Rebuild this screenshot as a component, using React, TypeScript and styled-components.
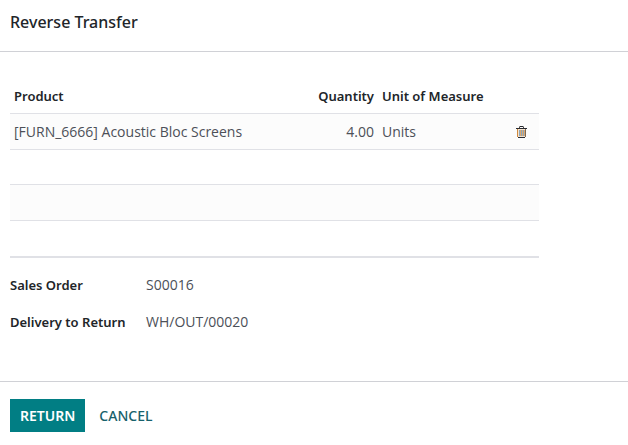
import React from "react";
import styled, { createGlobalStyle } from "styled-components";

const GlobalStyle = createGlobalStyle`
  *, *::before, *::after { box-sizing: border-box; }
  body {
    margin: 0;
    background: #fff;
    color: #4c5058;
    font-family: "Noto Sans", sans-serif;
    font-size: 14px;
    line-height: 20px;
  }
`;

const Dialog = styled.section`
  display: flex;
  flex-direction: column;
`;

const DialogHeader = styled.header`
  padding: 10px 10px 17px;
  border-bottom: 1px solid #d0d1d6;
`;

const Title = styled.h1`
  margin: 0;
  color: #212529;
  font-size: 16px;
  font-weight: 500;
  line-height: 24px;
`;

const DialogBody = styled.main`
  padding: 28px 89px 49px 10px;
`;

const LinesTable = styled.table`
  width: 100%;
  border-collapse: separate;
  border-spacing: 0;
  table-layout: fixed;
  border-bottom: 1px solid #e0e1e6;
`;

const Column = styled.col<{ $width?: number }>`
  width: ${({ $width }) => ($width ? `${$width}px` : "auto")};
`;

const HeadCell = styled.th<{ $align?: "right" }>`
  height: 34px;
  padding: 0 4px 2px;
  border-bottom: 1px solid #e0e1e6;
  color: #212529;
  font-size: 13px;
  font-weight: 600;
  text-align: ${({ $align }) => $align ?? "left"};
  white-space: nowrap;
`;

const Row = styled.tr<{ $compact?: boolean }>`
  height: ${({ $compact }) => ($compact ? 35 : 36)}px;
  &:nth-child(odd) { background: #fcfcfc; }
`;

const Cell = styled.td<{ $align?: "right" }>`
  padding: 0 4px;
  border-bottom: 1px solid #e0e1e6;
  font-family: "Open Sans", sans-serif;
  text-align: ${({ $align }) => $align ?? "left"};
  white-space: nowrap;
`;

const DeleteButton = styled.button`
  display: flex;
  padding: 0;
  border: 0;
  background: none;
  color: #212529;
  cursor: pointer;
`;

const Fields = styled.dl`
  display: grid;
  grid-template-columns: 136px 1fr;
  row-gap: 17px;
  margin: 17px 0 0;
`;

const FieldLabel = styled.dt`
  color: #212529;
  font-size: 13px;
  font-weight: 600;
`;

const FieldValue = styled.dd`
  margin: 0;
  font-family: "Open Sans", sans-serif;
`;

const DialogFooter = styled.footer`
  display: flex;
  gap: 4px;
  padding: 17px 10px 13px;
  border-top: 1px solid #d0d1d6;
`;

const Button = styled.button<{ $primary?: boolean }>`
  height: 33px;
  padding: 0 10px;
  border: 0;
  background: ${({ $primary }) => ($primary ? "#017e84" : "transparent")};
  color: ${({ $primary }) => ($primary ? "#fff" : "#17616b")};
  font: inherit;
  font-weight: ${({ $primary }) => ($primary ? 600 : 500)};
  text-transform: uppercase;
  cursor: pointer;
`;

const TrashIcon = () => (
  <svg width="11" height="12" viewBox="0 0 11 12" fill="none" aria-hidden="true">
    <path d="M2 3h7v8H2z" fill="#f3e3cf" />
    <path d="M3.5 4v6M5.5 4v6M7.5 4v6" stroke="#8fa6b8" />
    <path d="M4.5 4v6M6.5 4v6M8.5 4v6" stroke="#dca970" />
    <path d="M1.5 3v8" stroke="#d08a3e" />
    <path d="M9.5 3v8" stroke="#7d6a58" />
    <path d="M3.5 .5h4" stroke="#282a30" />
    <path d="M3.5 1v1M7.5 1v1" stroke="#514941" />
    <path d="M0 2.5h11M2 11.5h7" stroke="#282a30" />
  </svg>
);

const fields = [
  { label: "Sales Order", value: "S00016" },
  { label: "Delivery to Return", value: "WH/OUT/00020" },
];

export default function App() {
  return (
    <>
      <GlobalStyle />
      <Dialog role="dialog" aria-labelledby="dialog-title">
        <DialogHeader>
          <Title id="dialog-title">Reverse Transfer</Title>
        </DialogHeader>
        <DialogBody>
          <LinesTable>
            <colgroup>
              <Column />
              <Column $width={90} />
              <Column $width={134} />
              <Column $width={27} />
            </colgroup>
            <thead>
              <tr>
                <HeadCell scope="col">Product</HeadCell>
                <HeadCell scope="col" $align="right">Quantity</HeadCell>
                <HeadCell scope="col">Unit of Measure</HeadCell>
                <HeadCell as="td" />
              </tr>
            </thead>
            <tbody>
              <Row>
                <Cell>[FURN_6666] Acoustic Bloc Screens</Cell>
                <Cell $align="right">4.00</Cell>
                <Cell>Units</Cell>
                <Cell>
                  <DeleteButton type="button" aria-label="Delete row">
                    <TrashIcon />
                  </DeleteButton>
                </Cell>
              </Row>
              {[0, 1, 2].map((row) => (
                <Row key={row} $compact={row === 0}>
                  <Cell colSpan={4} />
                </Row>
              ))}
            </tbody>
          </LinesTable>
          <Fields>
            {fields.map(({ label, value }) => (
              <React.Fragment key={label}>
                <FieldLabel>{label}</FieldLabel>
                <FieldValue>{value}</FieldValue>
              </React.Fragment>
            ))}
          </Fields>
        </DialogBody>
        <DialogFooter>
          <Button type="button" $primary>Return</Button>
          <Button type="button">Cancel</Button>
        </DialogFooter>
      </Dialog>
    </>
  );
}
